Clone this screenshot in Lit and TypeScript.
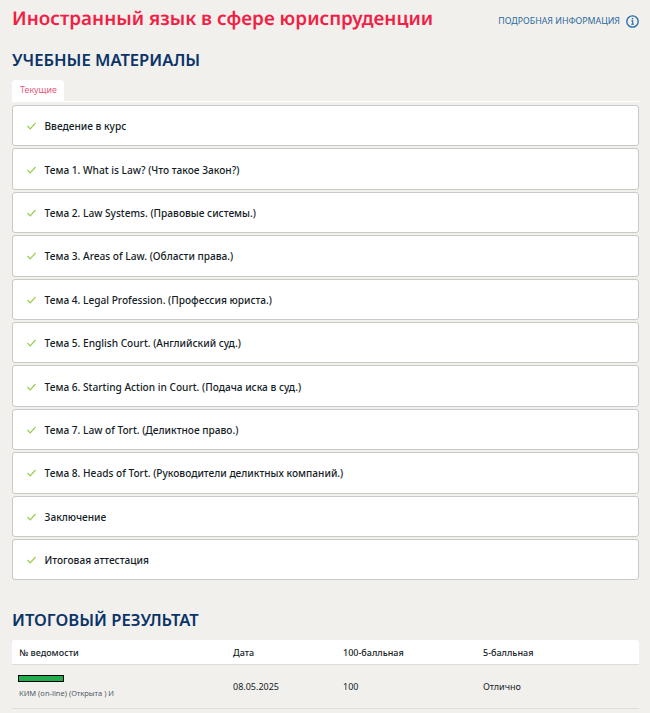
import { html, css, LitElement } from 'lit'
import { customElement } from 'lit/decorators.js'

const TOPICS = [
  'Введение в курс',
  'Тема 1. What is Law? (Что такое Закон?)',
  'Тема 2. Law Systems. (Правовые системы.)',
  'Тема 3. Areas of Law. (Области права.)',
  'Тема 4. Legal Profession. (Профессия юриста.)',
  'Тема 5. English Court. (Английский суд.)',
  'Тема 6. Starting Action in Court. (Подача иска в суд.)',
  'Тема 7. Law of Tort. (Деликтное право.)',
  'Тема 8. Heads of Tort. (Руководители деликтных компаний.)',
  'Заключение',
  'Итоговая аттестация'
]

@customElement('app-root')
export class AppRoot extends LitElement {
  static styles = css`
    :host {
      display: block;
      height: 713px;
      overflow: hidden;
      background: #f2f0ed;
      font-family: 'Noto Sans', 'Open Sans', sans-serif;
      color: #141c26;
    }

    .page {
      padding: 0 11px 0 12px;
    }

    .head {
      display: flex;
      justify-content: space-between;
      align-items: center;
      height: 36px;
    }

    h1 {
      margin: 0;
      font-size: 18.9px;
      font-weight: 600;
      text-rendering: geometricPrecision;
      color: #f01f46;
    }

    .info {
      display: flex;
      align-items: center;
      gap: 6px;
      padding-top: 6px;
      font-size: 8.8px;
      color: #2a6a9c;
    }

    h2 {
      margin: 0;
      font-size: 16.6px;
      line-height: 24px;
      font-weight: 600;
      color: #0b3468;
    }

    .materials {
      margin-top: 12px;
    }

    .tabs {
      margin-top: 8px;
      border-bottom: 1px solid #fff;
      display: flex;
    }

    .tab {
      background: #fff;
      border-radius: 4px 4px 0 0;
      padding: 0 7px 0 8px;
      height: 21px;
      line-height: 21px;
      font-size: 8.8px;
      color: #e8587c;
    }

    .list {
      margin-top: 3px;
      display: flex;
      flex-direction: column;
      gap: 2px;
    }

    .row {
      box-sizing: border-box;
      height: 41.42px;
      display: flex;
      align-items: center;
      gap: 8.5px;
      padding: 1px 0 0 14px;
      background: #fff;
      border: 1px solid #c9c9c7;
      border-radius: 3px;
      font-size: 10.13px;
      font-weight: 500;
    }

    .result {
      margin-top: 28px;
    }

    .table {
      margin-top: 8px;
    }

    .tr {
      display: grid;
      grid-template-columns: 214px 110px 140px 1fr;
      align-items: center;
      font-size: 9px;
    }

    .tr > div {
      padding-left: 7px;
    }

    .th {
      height: 25px;
      padding-top: 1px;
      background: #fff;
      border-bottom: 1px solid #dedcd9;
      border-radius: 3px 3px 0 0;
      box-sizing: border-box;
      font-weight: 500;
    }

    .td {
      height: 44px;
      box-sizing: border-box;
      border-bottom: 1px solid #e0dedb;
    }

    .bar {
      width: 44px;
      height: 5px;
      margin: 0 0 6px -1px;
      background: #22ac4c;
      border: 1px solid #000;
    }

    .kim {
      font-size: 7.5px;
      color: #4d5a68;
    }
  `

  render() {
    return html`
      <div class="page">
        <div class="head">
          <h1>Иностранный язык в сфере юриспруденции</h1>
          <div class="info">
            ПОДРОБНАЯ ИНФОРМАЦИЯ
            <svg width="13" height="13" viewBox="0 0 13 13" fill="none">
              <circle cx="6.5" cy="6.5" r="5.7" stroke="#1f6aa5" stroke-width="1.3"></circle>
              <path d="M5.3 5.8h1.4v3.4M5.2 9.3h2.7" stroke="#1f6aa5" stroke-width="1.1"></path>
              <rect x="5.9" y="3" width="1.3" height="1.4" fill="#1f6aa5"></rect>
            </svg>
          </div>
        </div>
        <h2 class="materials">УЧЕБНЫЕ МАТЕРИАЛЫ</h2>
        <div class="tabs"><div class="tab">Текущие</div></div>
        <div class="list">
          ${TOPICS.map(
            (topic) => html`
              <div class="row">
                <svg width="9" height="8" viewBox="0 0 9 8" fill="none">
                  <path d="M.5 4l2.7 2.8L8.5 1" stroke="#9ccb4e" stroke-width="1.2"></path>
                </svg>
                ${topic}
              </div>
            `
          )}
        </div>
        <h2 class="result">ИТОГОВЫЙ РЕЗУЛЬТАТ</h2>
        <div class="table">
          <div class="tr th">
            <div>№ ведомости</div>
            <div>Дата</div>
            <div>100-балльная</div>
            <div>5-балльная</div>
          </div>
          <div class="tr td">
            <div>
              <div class="bar"></div>
              <div class="kim">КИМ (on-line) (Открыта ) И</div>
            </div>
            <div>08.05.2025</div>
            <div>100</div>
            <div>Отлично</div>
          </div>
        </div>
      </div>
    `
  }
}
